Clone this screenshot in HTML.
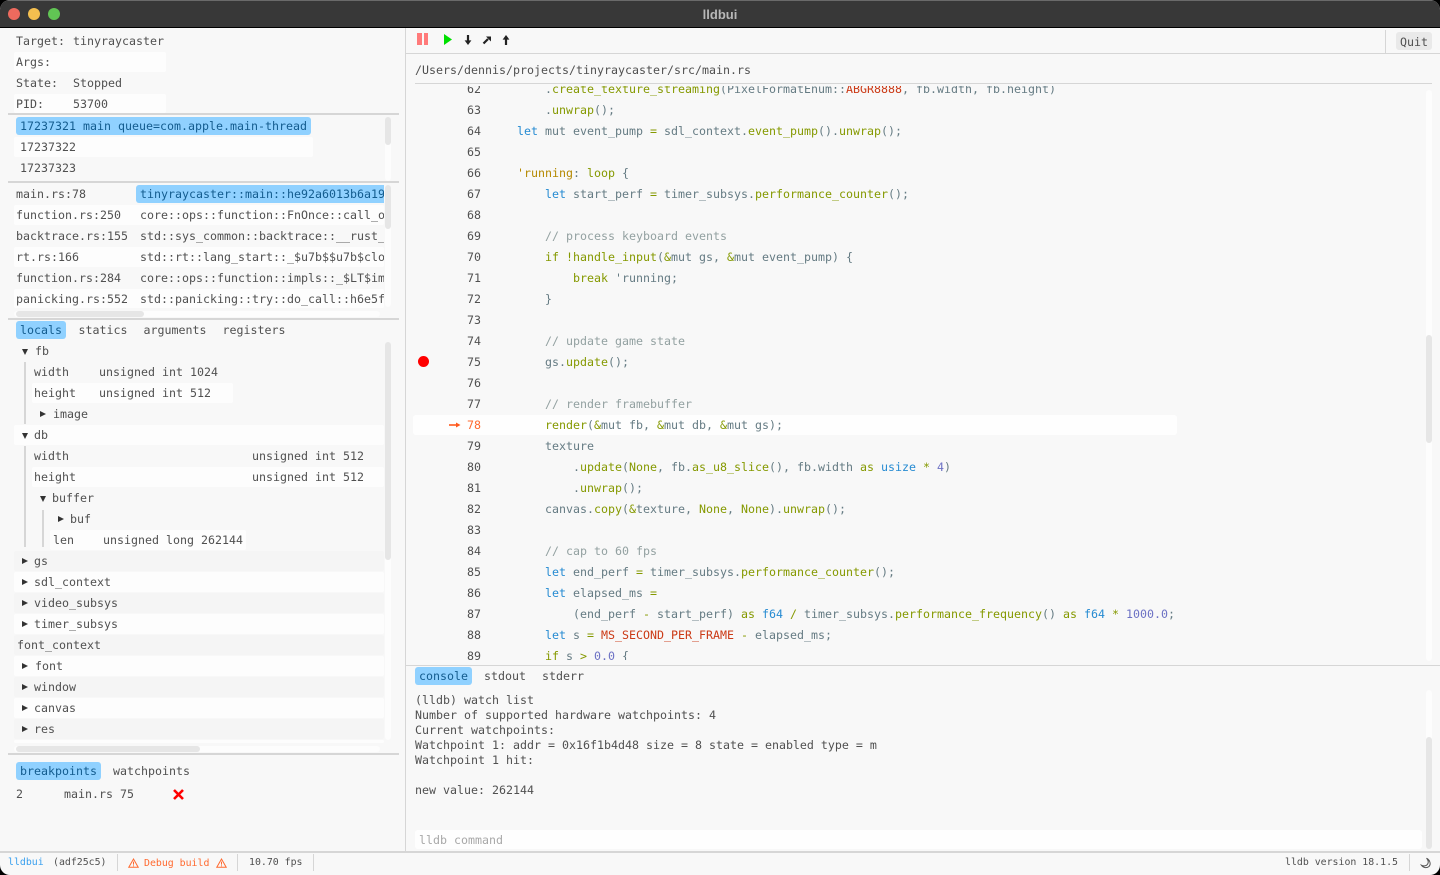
<!DOCTYPE html>
<html><head><meta charset="utf-8"><title>lldbui</title>
<style>
html,body{margin:0;padding:0;width:1440px;height:875px;background:#000;overflow:hidden}
#w{position:absolute;left:0;top:0;width:1440px;height:875px;background:#f8f8f8;border-radius:10px;overflow:hidden;font-family:"DejaVu Sans Mono","Liberation Mono",monospace;font-size:11.63px;color:#505050}
.a{position:absolute}
.t{position:absolute;white-space:pre;line-height:21px;height:21px}
.s{position:absolute;background:#fdfdfd;border-radius:2px}
.g{position:absolute;background:#f5f5f5;border-radius:2px}
.h{position:absolute;background:#d6d6d6}
.b{position:absolute;background:#90d1ff;border-radius:3px}
.bt{color:#135c8f}
.tr{position:absolute;background:#fdfdfd;border-radius:3px}
.th{position:absolute;background:#e6e6e6;border-radius:3px}
.r{position:absolute;width:0;height:0;border-left:6px solid #333;border-top:3.5px solid transparent;border-bottom:3.5px solid transparent}
.d{position:absolute;width:0;height:0;border-top:6px solid #333;border-left:3.5px solid transparent;border-right:3.5px solid transparent}
#code{position:absolute;left:407px;top:84px;width:1017px;height:580px;overflow:hidden;color:#657b83;clip-path:inset(2px 0 4px 0)}
#code .l{position:absolute;white-space:pre;line-height:21px;height:21px;left:82px}
#code .n{position:absolute;line-height:21px;height:21px;left:32px;width:42px;text-align:right;color:#505050}
i{font-style:normal}
.k{color:#268bd2}.o{color:#859900}.c{color:#93a1a1}.e{color:#cb3a16}.m{color:#6c71c4}.y{color:#b58900}
.st{position:absolute;white-space:pre;font-size:9.9px;line-height:14px;height:14px;top:856px}
.cl{position:absolute;left:415px;white-space:pre;line-height:15px;height:15px}
</style></head><body>
<div id="w">
<!-- title bar -->
<div class="a" style="left:0;top:0;width:1440px;height:27px;background:#383838;border-top:1px solid #6a6a6a;box-sizing:border-box"></div>
<div class="a" style="left:0;top:27px;width:1440px;height:1px;background:#000"></div>
<div class="a" style="left:8px;top:8px;width:12px;height:12px;border-radius:50%;background:#ed6a5e"></div>
<div class="a" style="left:28px;top:8px;width:12px;height:12px;border-radius:50%;background:#f4bf4f"></div>
<div class="a" style="left:48px;top:8px;width:12px;height:12px;border-radius:50%;background:#61c554"></div>
<div class="a" style="left:0;top:6px;width:1440px;text-align:center;font:bold 13px/17px 'Liberation Sans',sans-serif;color:#b8b8b8">lldbui</div>

<!-- vertical divider -->
<div class="h" style="left:405px;top:28px;width:1px;height:824px"></div>

<!-- left: info -->
<div class="s" style="left:14px;top:52px;width:152px;height:20px"></div>
<div class="s" style="left:14px;top:94px;width:152px;height:19px"></div>
<div class="t" style="left:16px;top:31px">Target:</div><div class="t" style="left:73px;top:31px">tinyraycaster</div>
<div class="t" style="left:16px;top:52px">Args:</div>
<div class="t" style="left:16px;top:73px">State:</div><div class="t" style="left:73px;top:73px">Stopped</div>
<div class="t" style="left:16px;top:94px">PID:</div><div class="t" style="left:73px;top:94px">53700</div>
<div class="h" style="left:8px;top:113px;width:391px;height:2px"></div>

<!-- threads -->
<div class="tr" style="left:385px;top:117px;width:6px;height:64px"></div>
<div class="th" style="left:385px;top:117px;width:6px;height:28px"></div>
<div class="b" style="left:16px;top:117px;width:295px;height:18px"></div>
<div class="s" style="left:14px;top:137px;width:299px;height:20px"></div>
<div class="t bt" style="left:20px;top:116px">17237321 main queue=com.apple.main-thread</div>
<div class="t" style="left:20px;top:137px">17237322</div>
<div class="t" style="left:20px;top:158px">17237323</div>
<div class="h" style="left:8px;top:181px;width:391px;height:2px"></div>

<!-- frames -->
<div class="tr" style="left:385px;top:185px;width:6px;height:122px"></div>
<div class="th" style="left:385px;top:185px;width:6px;height:44px"></div>
<div class="s" style="left:14px;top:205px;width:370px;height:20px"></div>
<div class="s" style="left:14px;top:247px;width:370px;height:20px"></div>
<div class="s" style="left:14px;top:289px;width:370px;height:19px"></div>
<div class="b" style="left:136px;top:185px;width:248px;height:18px;border-radius:3px 0 0 3px"></div>
<div class="t" style="left:16px;top:184px">main.rs:78</div>
<div class="t" style="left:16px;top:205px">function.rs:250</div>
<div class="t" style="left:16px;top:226px">backtrace.rs:155</div>
<div class="t" style="left:16px;top:247px">rt.rs:166</div>
<div class="t" style="left:16px;top:268px">function.rs:284</div>
<div class="t" style="left:16px;top:289px">panicking.rs:552</div>
<div class="a" style="left:140px;top:184px;width:244px;height:126px;overflow:hidden">
<div class="t bt" style="left:0;top:0">tinyraycaster::main::he92a6013b6a19f2c</div>
<div class="t" style="left:0;top:21px">core::ops::function::FnOnce::call_once</div>
<div class="t" style="left:0;top:42px">std::sys_common::backtrace::__rust_begin</div>
<div class="t" style="left:0;top:63px">std::rt::lang_start::_$u7b$$u7b$closure</div>
<div class="t" style="left:0;top:84px">core::ops::function::impls::_$LT$impl</div>
<div class="t" style="left:0;top:105px">std::panicking::try::do_call::h6e5f4a</div>
</div>
<div class="tr" style="left:14px;top:311px;width:366px;height:6px"></div>
<div class="th" style="left:16px;top:311px;width:128px;height:6px"></div>
<div class="h" style="left:8px;top:317.5px;width:391px;height:2px"></div>

<!-- vars tabs -->
<div class="b" style="left:16px;top:321px;width:50px;height:18px"></div>
<div class="t bt" style="left:20px;top:320px">locals</div>
<div class="t" style="left:78.5px;top:320px">statics</div>
<div class="t" style="left:143.5px;top:320px">arguments</div>
<div class="t" style="left:222.5px;top:320px">registers</div>

<!-- vars stripes -->
<div class="s" style="left:32px;top:383px;width:201px;height:20px"></div>
<div class="s" style="left:14px;top:425px;width:370px;height:20px"></div>
<div class="s" style="left:32px;top:467px;width:352px;height:20px"></div>
<div class="s" style="left:50px;top:530px;width:196px;height:20px"></div>
<div class="g" style="left:14px;top:551px;width:370px;height:20px"></div>
<div class="s" style="left:14px;top:572px;width:370px;height:20px"></div>
<div class="g" style="left:14px;top:593px;width:370px;height:20px"></div>
<div class="s" style="left:14px;top:614px;width:370px;height:20px"></div>
<div class="g" style="left:14px;top:635px;width:370px;height:20px"></div>
<div class="s" style="left:14px;top:656px;width:370px;height:20px"></div>
<div class="g" style="left:14px;top:677px;width:370px;height:20px"></div>
<div class="s" style="left:14px;top:698px;width:370px;height:20px"></div>
<div class="g" style="left:14px;top:719px;width:370px;height:20px"></div>
<div class="s" style="left:14px;top:740px;width:370px;height:3px"></div>

<!-- guides -->
<div class="h" style="left:24px;top:362px;width:2px;height:62px"></div>
<div class="h" style="left:24px;top:446px;width:2px;height:101px"></div>
<div class="h" style="left:42px;top:510px;width:2px;height:37px"></div>

<!-- vars rows -->
<div class="a" style="left:0;top:1px">
<div class="d" style="left:22px;top:348px"></div><div class="t" style="left:35px;top:340px">fb</div>
<div class="t" style="left:34px;top:361px">width</div><div class="t" style="left:99px;top:361px">unsigned int 1024</div>
<div class="t" style="left:34px;top:382px">height</div><div class="t" style="left:99px;top:382px">unsigned int 512</div>
<div class="r" style="left:40px;top:410px"></div><div class="t" style="left:53px;top:403px">image</div>
<div class="d" style="left:22px;top:432px"></div><div class="t" style="left:34px;top:424px">db</div>
<div class="t" style="left:34px;top:445px">width</div><div class="t" style="left:252px;top:445px">unsigned int 512</div>
<div class="t" style="left:34px;top:466px">height</div><div class="t" style="left:252px;top:466px">unsigned int 512</div>
<div class="d" style="left:40px;top:495px"></div><div class="t" style="left:52px;top:487px">buffer</div>
<div class="r" style="left:58px;top:515px"></div><div class="t" style="left:70px;top:508px">buf</div>
<div class="t" style="left:53px;top:529px">len</div><div class="t" style="left:103px;top:529px">unsigned long 262144</div>
<div class="r" style="left:22px;top:557px"></div><div class="t" style="left:34px;top:550px">gs</div>
<div class="r" style="left:22px;top:578px"></div><div class="t" style="left:34px;top:571px">sdl_context</div>
<div class="r" style="left:22px;top:599px"></div><div class="t" style="left:34px;top:592px">video_subsys</div>
<div class="r" style="left:22px;top:620px"></div><div class="t" style="left:34px;top:613px">timer_subsys</div>
<div class="t" style="left:17px;top:634px">font_context</div>
<div class="r" style="left:22px;top:662px"></div><div class="t" style="left:35px;top:655px">font</div>
<div class="r" style="left:22px;top:683px"></div><div class="t" style="left:34px;top:676px">window</div>
<div class="r" style="left:22px;top:704px"></div><div class="t" style="left:34px;top:697px">canvas</div>
<div class="r" style="left:22px;top:725px"></div><div class="t" style="left:34px;top:718px">res</div>
</div>

<!-- vars scrollbars -->
<div class="tr" style="left:385px;top:342px;width:6px;height:398px"></div>
<div class="th" style="left:385px;top:342px;width:6px;height:218px"></div>
<div class="tr" style="left:14px;top:746px;width:366px;height:6px"></div>
<div class="th" style="left:16px;top:746px;width:184px;height:6px"></div>
<div class="h" style="left:8px;top:752.5px;width:391px;height:2px"></div>

<!-- breakpoints -->
<div class="b" style="left:16px;top:762px;width:85px;height:18px"></div>
<div class="t bt" style="left:20px;top:761px">breakpoints</div>
<div class="t" style="left:113px;top:761px">watchpoints</div>
<div class="t" style="left:16px;top:784px">2</div>
<div class="t" style="left:64px;top:784px">main.rs 75</div>
<svg class="a" style="left:172px;top:788px" width="13" height="13" viewBox="0 0 13 13"><path d="M2 2L11 11M11 2L2 11" stroke="#f00" stroke-width="2.6" fill="none"/></svg>

<!-- toolbar -->
<div class="a" style="left:417px;top:33px;width:5px;height:12px;background:#ff7a7a"></div>
<div class="a" style="left:424px;top:33px;width:4px;height:12px;background:#ff7a7a"></div>
<svg class="a" style="left:443px;top:33px" width="10" height="13" viewBox="0 0 10 13"><path d="M1 1L9 6.5L1 12Z" fill="#00e000"/></svg>
<svg class="a" style="left:463px;top:34px" width="10" height="12" viewBox="0 0 10 12"><path d="M5 1V7" stroke="#222" stroke-width="2.2" fill="none"/><path d="M1.6 6.4H8.4L5 11Z" fill="#222"/></svg>
<svg class="a" style="left:482px;top:35px" width="10" height="10" viewBox="0 0 10 10"><path d="M1.5 8.5L6 4" stroke="#222" stroke-width="2.2" fill="none"/><path d="M4 1.5H9V6.5Z" fill="#222"/></svg>
<svg class="a" style="left:501px;top:34px" width="10" height="12" viewBox="0 0 10 12"><path d="M5 11V5" stroke="#222" stroke-width="2.2" fill="none"/><path d="M1.6 5.6H8.4L5 1Z" fill="#222"/></svg>
<div class="h" style="left:1385px;top:30px;width:1px;height:23px"></div>
<div class="a" style="left:1396px;top:32px;width:36px;height:18px;background:#e9e9e9;border-radius:3px"></div>
<div class="t" style="left:1400px;top:32px">Quit</div>
<div class="h" style="left:406px;top:53px;width:1034px;height:1px"></div>
<div class="t" style="left:415px;top:60px">/Users/dennis/projects/tinyraycaster/src/main.rs</div>
<div class="h" style="left:415px;top:83px;width:1017px;height:1px"></div>

<!-- code scrollbar -->
<div class="tr" style="left:1426px;top:90px;width:6px;height:571px"></div>
<div class="th" style="left:1426px;top:335px;width:6px;height:108px"></div>

<!-- code -->
<div id="code">
<div class="a" style="left:6px;top:331px;width:764px;height:20px;background:#fefefe;border-radius:3px"></div>
<div class="a" style="left:11px;top:272px;width:11px;height:11px;border-radius:50%;background:#f00"></div>
<svg class="a" style="left:42px;top:336px" width="12" height="10" viewBox="0 0 12 10"><path d="M0 5H8" stroke="#ff5a1e" stroke-width="1.6" fill="none"/><path d="M7 2.5L11.5 5L7 7.5Z" fill="#ff5a1e"/></svg>

<div class="n" style="top:-5.5px">62</div><div class="l" style="top:-5.5px">        .<i class="o">create_texture_streaming</i>(PixelFormatEnum::<i class="e">ABGR8888</i>, fb.width, fb.height)</div>
<div class="n" style="top:15.5px">63</div><div class="l" style="top:15.5px">        .<i class="o">unwrap</i>();</div>
<div class="n" style="top:36.5px">64</div><div class="l" style="top:36.5px">    <i class="k">let</i> mut event_pump <i class="o">=</i> sdl_context.<i class="o">event_pump</i>().<i class="o">unwrap</i>();</div>
<div class="n" style="top:57.5px">65</div>
<div class="n" style="top:78.5px">66</div><div class="l" style="top:78.5px">    <i class="y">'running</i>: <i class="o">loop</i> {</div>
<div class="n" style="top:99.5px">67</div><div class="l" style="top:99.5px">        <i class="k">let</i> start_perf <i class="o">=</i> timer_subsys.<i class="o">performance_counter</i>();</div>
<div class="n" style="top:120.5px">68</div>
<div class="n" style="top:141.5px">69</div><div class="l c" style="top:141.5px">        // process keyboard events</div>
<div class="n" style="top:162.5px">70</div><div class="l" style="top:162.5px">        <i class="o">if</i> <i class="o">!handle_input</i>(<i class="o">&amp;</i>mut gs, <i class="o">&amp;</i>mut event_pump) {</div>
<div class="n" style="top:183.5px">71</div><div class="l" style="top:183.5px">            <i class="o">break</i> 'running;</div>
<div class="n" style="top:204.5px">72</div><div class="l" style="top:204.5px">        }</div>
<div class="n" style="top:225.5px">73</div>
<div class="n" style="top:246.5px">74</div><div class="l c" style="top:246.5px">        // update game state</div>
<div class="n" style="top:267.5px">75</div><div class="l" style="top:267.5px">        gs.<i class="o">update</i>();</div>
<div class="n" style="top:288.5px">76</div>
<div class="n" style="top:309.5px">77</div><div class="l c" style="top:309.5px">        // render framebuffer</div>
<div class="n" style="top:330.5px;color:#ff6a30">78</div><div class="l" style="top:330.5px">        <i class="o">render</i>(<i class="o">&amp;</i>mut fb, <i class="o">&amp;</i>mut db, <i class="o">&amp;</i>mut gs);</div>
<div class="n" style="top:351.5px">79</div><div class="l" style="top:351.5px">        texture</div>
<div class="n" style="top:372.5px">80</div><div class="l" style="top:372.5px">            .<i class="o">update</i>(<i class="o">None</i>, fb.<i class="o">as_u8_slice</i>(), fb.width <i class="o">as</i> <i class="k">usize</i> <i class="o">*</i> <i class="m">4</i>)</div>
<div class="n" style="top:393.5px">81</div><div class="l" style="top:393.5px">            .<i class="o">unwrap</i>();</div>
<div class="n" style="top:414.5px">82</div><div class="l" style="top:414.5px">        canvas.<i class="o">copy</i>(<i class="o">&amp;</i>texture, <i class="o">None</i>, <i class="o">None</i>).<i class="o">unwrap</i>();</div>
<div class="n" style="top:435.5px">83</div>
<div class="n" style="top:456.5px">84</div><div class="l c" style="top:456.5px">        // cap to 60 fps</div>
<div class="n" style="top:477.5px">85</div><div class="l" style="top:477.5px">        <i class="k">let</i> end_perf <i class="o">=</i> timer_subsys.<i class="o">performance_counter</i>();</div>
<div class="n" style="top:498.5px">86</div><div class="l" style="top:498.5px">        <i class="k">let</i> elapsed_ms <i class="o">=</i></div>
<div class="n" style="top:519.5px">87</div><div class="l" style="top:519.5px">            (end_perf <i class="o">-</i> start_perf) <i class="o">as</i> <i class="k">f64</i> <i class="o">/</i> timer_subsys.<i class="o">performance_frequency</i>() <i class="o">as</i> <i class="k">f64</i> <i class="o">*</i> <i class="m">1000.0</i>;</div>
<div class="n" style="top:540.5px">88</div><div class="l" style="top:540.5px">        <i class="k">let</i> s <i class="o">=</i> <i class="e">MS_SECOND_PER_FRAME</i> <i class="o">-</i> elapsed_ms;</div>
<div class="n" style="top:561.5px">89</div><div class="l" style="top:561.5px">        <i class="o">if</i> s <i class="o">&gt;</i> <i class="m">0.0</i> {</div>
</div>

<!-- console -->
<div class="h" style="left:406px;top:665px;width:1034px;height:1px"></div>
<div class="b" style="left:415px;top:667px;width:57px;height:18px"></div>
<div class="t bt" style="left:419px;top:665.5px">console</div>
<div class="t" style="left:484px;top:665.5px">stdout</div>
<div class="t" style="left:542px;top:665.5px">stderr</div>
<div class="cl" style="top:693px">(lldb) watch list</div>
<div class="cl" style="top:708px">Number of supported hardware watchpoints: 4</div>
<div class="cl" style="top:723px">Current watchpoints:</div>
<div class="cl" style="top:738px">Watchpoint 1: addr = 0x16f1b4d48 size = 8 state = enabled type = m</div>
<div class="cl" style="top:753px">Watchpoint 1 hit:</div>
<div class="cl" style="top:783px">new value: 262144</div>
<div class="tr" style="left:1426px;top:690px;width:6px;height:159px"></div>
<div class="th" style="left:1426px;top:737px;width:6px;height:112px"></div>
<div class="a" style="left:415px;top:830px;width:1007px;height:19px;background:#fefefe;border-radius:3px"></div>
<div class="t" style="left:419px;top:830px;color:#a8a8a8">lldb command</div>

<!-- status bar -->
<div class="h" style="left:0;top:851px;width:1440px;height:2px"></div>
<div class="st" style="left:8px;color:#3aa0ee">lldbui</div>
<div class="st" style="left:53px">(adf25c5)</div>
<div class="h" style="left:117px;top:854px;width:1px;height:17px"></div>
<svg class="a" style="left:128px;top:858px" width="11" height="10" viewBox="0 0 11 10"><path d="M5.5 1L10.2 9.2H0.8Z" stroke="#ff6a30" stroke-width="1" fill="none"/><path d="M5.5 3.6V6.6M5.5 7.4V8.4" stroke="#ff6a30" stroke-width="1"/></svg>
<div class="st" style="left:144px;top:857px;color:#ff6a30">Debug build</div>
<svg class="a" style="left:216px;top:858px" width="11" height="10" viewBox="0 0 11 10"><path d="M5.5 1L10.2 9.2H0.8Z" stroke="#ff6a30" stroke-width="1" fill="none"/><path d="M5.5 3.6V6.6M5.5 7.4V8.4" stroke="#ff6a30" stroke-width="1"/></svg>
<div class="h" style="left:237px;top:854px;width:1px;height:17px"></div>
<div class="st" style="left:249px">10.70 fps</div>
<div class="h" style="left:313px;top:854px;width:1px;height:17px"></div>
<div class="st" style="left:1285px">lldb version 18.1.5</div>
<div class="h" style="left:1409px;top:854px;width:1px;height:17px"></div>
<svg class="a" style="left:1420px;top:857px" width="12" height="12" viewBox="0 0 12 12"><path d="M6.5 1.2C8.2 3 8.8 5.4 7.4 7.4C6 9.2 3.4 9.2 1.4 8.2C3 10.6 6.4 11.4 8.8 9.6C11 7.8 10.6 3.4 6.5 1.2Z" stroke="#555" stroke-width="1" fill="none"/></svg>
</div>
</body></html>
